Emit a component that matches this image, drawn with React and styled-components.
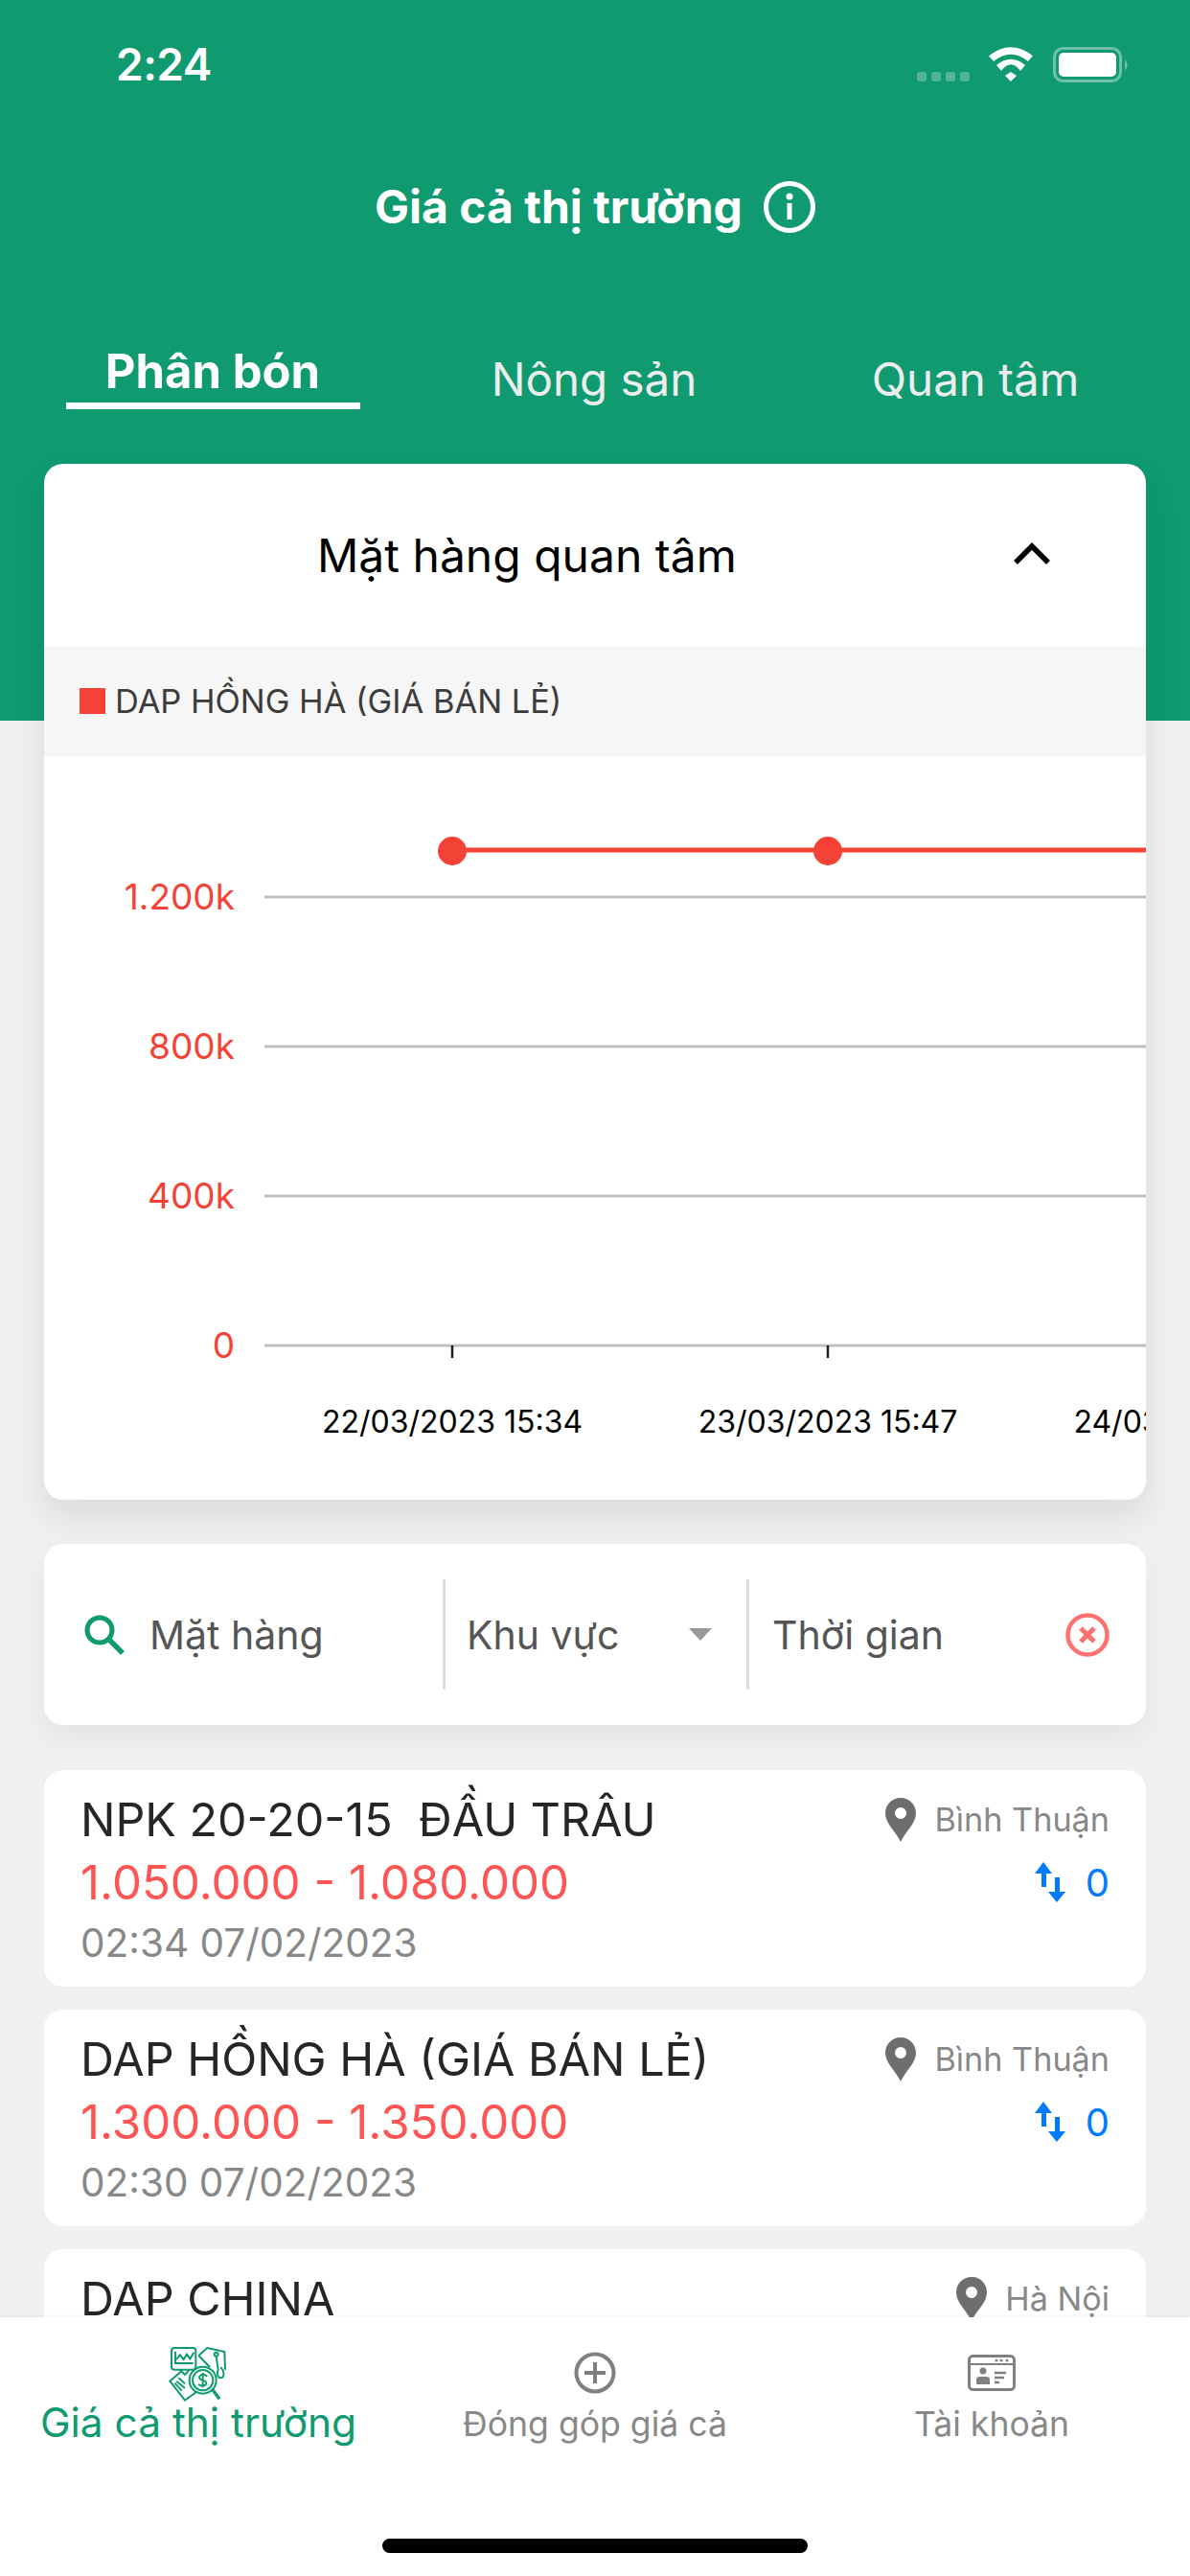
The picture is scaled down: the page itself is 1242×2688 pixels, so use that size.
import React from "react";
import styled, { createGlobalStyle } from "styled-components";

const GREEN = "#0f9a70";
const RED = "#f44336";
const FONT = `Inter, "Noto Sans", sans-serif`;

const GlobalStyle = createGlobalStyle`
  html, body { margin: 0; padding: 0; background: #f0f0f0; }
  * { box-sizing: border-box; }
  body { font-family: ${FONT}; }
`;

const Screen = styled.div`
  position: relative;
  width: 1242px;
  height: 2688px;
  overflow: hidden;
  background: #f0f0f0;
`;

const Header = styled.header`
  height: 752px;
  background: ${GREEN};
  color: #fff;
`;

const StatusBar = styled.div`
  display: flex;
  justify-content: space-between;
  align-items: flex-start;
  height: 189px;
  padding: 44px 64px 0 121px;
`;

const Clock = styled.span`
  font-size: 46px;
  line-height: 47px;
  font-weight: 600;
  letter-spacing: -0.5px;
`;

const StatusIcons = styled.div`
  display: flex;
  padding-top: 5px;
`;

const TitleRow = styled.div`
  display: flex;
  justify-content: center;
  align-items: center;
  gap: 22px;
  height: 54px;
`;

const Title = styled.h1`
  margin: 0;
  font-size: 48px;
  line-height: 54px;
  font-weight: 700;
`;

const Tabs = styled.nav`
  display: grid;
  grid-template-columns: repeat(3, 398px);
  padding: 115px 0 0 23px;
`;

const Tab = styled.div`
  display: flex;
  flex-direction: column;
  align-items: center;
  font-size: ${p => (p.$active ? 49 : 47.5)}px;
  line-height: 60px;
  font-weight: ${p => (p.$active ? 700 : 400)};
  color: ${p => (p.$active ? "#fff" : "#ececec")};
  padding-top: ${p => (p.$active ? 0 : 8)}px;
`;

const TabLine = styled.span`
  width: 307px;
  height: 7px;
  margin-top: 2px;
  background: #fff;
`;

const Content = styled.main`
  display: flex;
  flex-direction: column;
  margin-top: -268px;
  padding: 0 46px;
`;

const ChartCard = styled.section`
  height: 1081px;
  border-radius: 20px;
  background: #fff;
  overflow: hidden;
  box-shadow: 0 18px 36px rgba(0, 0, 0, 0.09);
`;

const ChartHead = styled.div`
  display: flex;
  align-items: center;
  height: 190px;
  padding: 0 100px 4px 285px;
  justify-content: space-between;
  font-size: 48px;
`;

const ChartTitle = styled.span`
  margin-top: 4px;
`;

const Legend = styled.div`
  display: flex;
  align-items: center;
  gap: 10px;
  height: 115px;
  padding: 0 37px;
  background: #f6f6f6;
  font-size: 34.4px;
  color: #3c3c3c;
`;

const LegendSwatch = styled.span`
  width: 27px;
  height: 27px;
  background: ${RED};
`;

const ChartSvg = styled.svg`
  display: block;
  font-family: ${FONT};
`;

const FilterCard = styled.section`
  display: flex;
  align-items: center;
  height: 189px;
  margin-top: 46px;
  border-radius: 20px;
  background: #fff;
  box-shadow: 0 14px 30px rgba(0, 0, 0, 0.05);
  font-size: 41px;
  color: #555;
`;

const FilterCell = styled.div`
  display: flex;
  align-items: center;
  justify-content: ${p => (p.$spread ? "space-between" : "flex-start")};
  gap: ${p => p.$gap || 0}px;
  width: ${p => p.$width}px;
  height: 115px;
  padding: ${p => p.$pad};
  border-left: ${p => (p.$divider ? "3px solid #ddd" : "none")};
`;

const Products = styled.div`
  display: flex;
  flex-direction: column;
  gap: 24px;
  margin-top: 47px;
`;

const Product = styled.article`
  display: flex;
  justify-content: space-between;
  height: 226px;
  padding: 19px 38px 0;
  border-radius: 20px;
  background: #fff;
`;

const ProductInfo = styled.div`
  display: flex;
  flex-direction: column;
`;

const ProductName = styled.div`
  font-size: 48.4px;
  line-height: 65px;
  color: #262626;
  white-space: pre;
`;

const Price = styled.div`
  font-size: 49.2px;
  line-height: 66px;
  color: #ff5454;
`;

const DateText = styled.div`
  font-size: 40.5px;
  line-height: 62px;
  color: #888;
`;

const ProductSide = styled.div`
  display: flex;
  flex-direction: column;
  align-items: flex-end;
`;

const Place = styled.div`
  display: flex;
  align-items: center;
  gap: 19px;
  height: 65px;
  font-size: 34.2px;
  color: #888;
`;

const Votes = styled.div`
  display: flex;
  align-items: center;
  gap: 20px;
  height: 66px;
  font-size: 40px;
  color: #007aff;
`;

const BottomBar = styled.nav`
  position: absolute;
  left: 0;
  right: 0;
  bottom: 0;
  height: 270px;
  display: grid;
  grid-template-columns: repeat(3, 414px);
  background: #fff;
  box-shadow: 0 -1px 4px rgba(0, 0, 0, 0.06);
`;

const BarItem = styled.div`
  display: flex;
  flex-direction: column;
  align-items: center;
`;

const BarIcon = styled.div`
  display: flex;
  align-items: center;
  justify-content: center;
  height: 60px;
  margin-top: 28px;
`;

const BarLabel = styled.span`
  font-size: ${p => (p.$active ? 42.4 : 35.6)}px;
  line-height: 50px;
  margin-top: ${p => (p.$active ? -3 : -1)}px;
  color: ${p => (p.$active ? GREEN : "#888")};
  white-space: nowrap;
`;

const HomeIndicator = styled.span`
  position: absolute;
  left: 399px;
  bottom: 24px;
  width: 444px;
  height: 15px;
  border-radius: 8px;
  background: #000;
`;

const yTicks = [
  { label: "1.200k", y: 147 },
  { label: "800k", y: 303 },
  { label: "400k", y: 459 },
  { label: "0", y: 615 },
];

const xTicks = [
  { label: "22/03/2023 15:34", x: 426 },
  { label: "23/03/2023 15:47", x: 818 },
  { label: "24/03/2023 15:47", x: 1210 },
];

const products = [
  { name: "NPK 20-20-15  ĐẦU TRÂU", price: "1.050.000 - 1.080.000", date: "02:34 07/02/2023", place: "Bình Thuận" },
  { name: "DAP HỒNG HÀ (GIÁ BÁN LẺ)", price: "1.300.000 - 1.350.000", date: "02:30 07/02/2023", place: "Bình Thuận" },
  { name: "DAP CHINA", price: "", date: "", place: "Hà Nội" },
];

function StatusGlyphs() {
  return (
    <svg width="222" height="40" viewBox="0 0 222 40">
      {[1, 16, 31, 46].map(x => (
        <rect key={x} x={x} y="26" width="10" height="10" rx="3" fill="#fff" opacity="0.27" />
      ))}
      <path d="M76 9.300 Q99 -8.700 122 9.300 L117 15 Q99 0.400 81 15Z" fill="#fff" />
      <path d="M84 19 Q99 6.400 114 19 L109 25 Q99 11.600 89 25Z" fill="#fff" />
      <path d="M93 30 L99 26 L105 30 L99 36Z" fill="#fff" />
      <rect x="144.500" y="1.500" width="69" height="34" rx="9" fill="none" stroke="#fff" strokeOpacity="0.4" strokeWidth="3" />
      <rect x="149" y="6" width="60" height="25" rx="5" fill="#fff" />
      <path d="M218 13 Q223 19 218 25Z" fill="#fff" opacity="0.4" />
    </svg>
  );
}

function InfoIcon() {
  return (
    <svg width="54" height="54" viewBox="0 0 54 54">
      <circle cx="27" cy="27" r="24.500" fill="none" stroke="#fff" strokeWidth="5" />
      <circle cx="27" cy="16" r="3.500" fill="#fff" />
      <rect x="24.500" y="23" width="5" height="17" fill="#fff" />
    </svg>
  );
}

function Chevron() {
  return (
    <svg width="38" height="24" viewBox="0 0 38 24">
      <path d="M2 22 L19 5 L36 22" fill="none" stroke="#000" strokeWidth="5.500" />
    </svg>
  );
}

function PriceChart() {
  return (
    <ChartSvg width="1150" height="776" viewBox="0 0 1150 776">
      <line x1="426" x2="1150" y1="98" y2="98" stroke={RED} strokeWidth="5" />
      <circle cx="426" cy="99" r="15" fill={RED} />
      <circle cx="818" cy="99" r="15" fill={RED} />
      {yTicks.map(t => (
        <g key={t.label}>
          <line x1="230" x2="1150" y1={t.y} y2={t.y} stroke="#c0c0c0" strokeWidth="3" />
          <text x="199" y={t.y + 13} textAnchor="end" fontSize="37" fill={RED}>{t.label}</text>
        </g>
      ))}
      {xTicks.map(t => (
        <g key={t.label}>
          <line x1={t.x} x2={t.x} y1="615" y2="628" stroke="#222" strokeWidth="2.500" />
          <text x={t.x} y="706" textAnchor="middle" fontSize="32" fill="#000">{t.label}</text>
        </g>
      ))}
    </ChartSvg>
  );
}

function SearchIcon() {
  return (
    <svg width="42" height="42" viewBox="0 0 42 42">
      <circle cx="16" cy="16" r="13" fill="none" stroke={GREEN} strokeWidth="5" />
      <path d="M25 25 L40 40" stroke={GREEN} strokeWidth="5.500" />
    </svg>
  );
}

function CaretDown() {
  return (
    <svg width="24" height="13" viewBox="0 0 24 13">
      <path d="M0 0 H24 L12 13Z" fill="#999" />
    </svg>
  );
}

function ClearIcon() {
  return (
    <svg width="46" height="46" viewBox="0 0 46 46">
      <circle cx="23" cy="23" r="20.500" fill="none" stroke="#ff7070" strokeWidth="4.500" />
      <path d="M16 16 L30 30 M30 16 L16 30" stroke="#ff7070" strokeWidth="5" />
    </svg>
  );
}

function PinIcon() {
  return (
    <svg width="32" height="46" viewBox="0 0 32 46">
      <path
        fillRule="evenodd"
        d="M16 0 C7 0 0 7 0 16 C0 27 11 35 16 46 C21 35 32 27 32 16 C32 7 25 0 16 0Z M16 10 A6 6 0 1 0 16 22 A6 6 0 1 0 16 10Z"
        fill="#6e6e6e"
      />
    </svg>
  );
}

function SwapIcon() {
  return (
    <svg width="34" height="42" viewBox="0 0 34 42">
      <path d="M10 0 L19 12 H13 V26 H8 V12 H1Z" fill="#007aff" />
      <path d="M24 42 L33 31 H27 V16 H22 V31 H15Z" fill="#007aff" />
    </svg>
  );
}

function MarketIcon() {
  return (
    <svg width="76" height="68" viewBox="0 0 228 204" fill="none" stroke={GREEN} strokeWidth="6">
      <rect x="30" y="24" width="76" height="68" rx="9" />
      <path d="M42 36 V72 H98 M46 60 L56 46 L68 60 L78 44 L88 58 L100 38" />
      <path d="M56 92 L72 108 L86 92" />
      <path d="M115 48 L142 24 L196 36 L198 92 M115 48 L150 84" />
      <circle cx="170" cy="44" r="6" />
      <path d="M170 50 L176 92 Q170 112 182 118 Q198 118 192 96 L184 84" />
      <circle cx="128" cy="125" r="42" />
      <circle cx="128" cy="125" r="32" />
      <path d="M142 113 Q128 102 118 112 Q114 122 128 125 Q142 128 138 138 Q128 148 114 138 M128 102 V148" />
      <path d="M158 154 L180 184" strokeWidth="10" />
      <path d="M62 96 L25 128 L72 188 L108 162 M52 118 L72 136 M46 128 L72 150 M40 134 L62 158" />
    </svg>
  );
}

function PlusCircleIcon() {
  return (
    <svg width="44" height="44" viewBox="0 0 44 44" fill="none" stroke="#808080">
      <circle cx="22" cy="22" r="19.500" strokeWidth="4" />
      <path d="M22 11 V33 M11 22 H33" strokeWidth="4" />
    </svg>
  );
}

function AccountIcon() {
  return (
    <svg width="50" height="38" viewBox="0 0 50 38">
      <rect x="1.500" y="1.500" width="47" height="35" rx="4" fill="none" stroke="#808080" strokeWidth="3" />
      <path d="M2 10 H48" stroke="#808080" strokeWidth="2" />
      <circle cx="30" cy="6" r="1.500" fill="#808080" />
      <circle cx="35" cy="6" r="1.500" fill="#808080" />
      <circle cx="41" cy="6" r="1.500" fill="#808080" />
      <circle cx="16" cy="17" r="3.500" fill="#808080" />
      <path d="M9 31 V26 Q9 23 13 23 H19 Q23 23 23 26 V31Z" fill="#808080" />
      <path d="M28 19 H40 M28 24 H38 M28 29 H33" stroke="#808080" strokeWidth="2.500" />
    </svg>
  );
}

export default function App() {
  return (
    <Screen>
      <GlobalStyle />
      <Header>
        <StatusBar>
          <Clock>2:24</Clock>
          <StatusIcons><StatusGlyphs /></StatusIcons>
        </StatusBar>
        <TitleRow>
          <Title>Giá cả thị trường</Title>
          <InfoIcon />
        </TitleRow>
        <Tabs>
          <Tab $active>Phân bón<TabLine /></Tab>
          <Tab>Nông sản</Tab>
          <Tab>Quan tâm</Tab>
        </Tabs>
      </Header>

      <Content>
        <ChartCard>
          <ChartHead>
            <ChartTitle>Mặt hàng quan tâm</ChartTitle>
            <Chevron />
          </ChartHead>
          <Legend>
            <LegendSwatch />
            DAP HỒNG HÀ (GIÁ BÁN LẺ)
          </Legend>
          <PriceChart />
        </ChartCard>

        <FilterCard>
          <FilterCell $width={416} $gap={26} $pad="0 0 0 42px">
            <SearchIcon />
            Mặt hàng
          </FilterCell>
          <FilterCell $divider $spread $width={317} $pad="0 36px 0 22px">
            Khu vực
            <CaretDown />
          </FilterCell>
          <FilterCell $divider $spread $width={417} $pad="0 38px 0 24px">
            Thời gian
            <ClearIcon />
          </FilterCell>
        </FilterCard>

        <Products>
          {products.map(p => (
            <Product key={p.name}>
              <ProductInfo>
                <ProductName>{p.name}</ProductName>
                <Price>{p.price}</Price>
                <DateText>{p.date}</DateText>
              </ProductInfo>
              <ProductSide>
                <Place><PinIcon />{p.place}</Place>
                <Votes><SwapIcon />0</Votes>
              </ProductSide>
            </Product>
          ))}
        </Products>
      </Content>

      <BottomBar>
        <BarItem>
          <BarIcon><MarketIcon /></BarIcon>
          <BarLabel $active>Giá cả thị trường</BarLabel>
        </BarItem>
        <BarItem>
          <BarIcon><PlusCircleIcon /></BarIcon>
          <BarLabel>Đóng góp giá cả</BarLabel>
        </BarItem>
        <BarItem>
          <BarIcon><AccountIcon /></BarIcon>
          <BarLabel>Tài khoản</BarLabel>
        </BarItem>
        <HomeIndicator />
      </BottomBar>
    </Screen>
  );
}
